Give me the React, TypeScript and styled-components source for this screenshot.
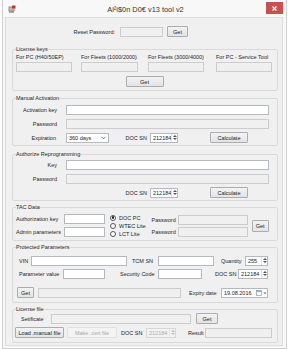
import React from "react";
import styled, { createGlobalStyle } from "styled-components";

const Global = createGlobalStyle`
  html, body { margin: 0; padding: 0; background: #ffffff; }
  body {
    font-family: "Liberation Sans", Arial, sans-serif;
    font-size: 5.5px;
    color: #1e1e1e;
  }
  * { box-sizing: border-box; }
`;

const Window = styled.div`
  margin-left: 2px;
  width: 285px;
  height: 349px;
  border: 1px solid #cfcfcf;
  border-top: none;
  background: #f8f8f8;
  padding: 0 3px 2px 2px;
  display: flex;
  flex-direction: column;
`;

const TitleBar = styled.div`
  height: 17px;
  display: grid;
  grid-template-columns: 1fr auto 1fr;
  align-items: center;
  padding-left: 3px;
`;

const Title = styled.div`
  font-size: 7.4px;
  color: #333;
  padding-top: 2px;
`;

const CloseBtn = styled.div`
  justify-self: end;
  align-self: start;
  margin-top: 2px;
  width: 17px;
  height: 12px;
  background: #c75050;
  display: flex;
  align-items: center;
  justify-content: center;
`;

const Content = styled.div`
  flex: 1;
  background: #f0f0f0;
  border: 1px solid #dcdcdc;
  display: flex;
  flex-direction: column;
`;

const Row = styled.div<{ $mt?: number; $pl?: number; $h?: number }>`
  display: flex;
  align-items: center;
  margin-top: ${(p) => p.$mt ?? 0}px;
  padding-left: ${(p) => p.$pl ?? 0}px;
  height: ${(p) => p.$h ?? 11}px;
`;

const Group = styled.fieldset<{ $mt: number; $pb?: number }>`
  margin: ${(p) => p.$mt}px 0 0 6px;
  width: 266px;
  border: 1px solid #d9d9d9;
  border-radius: 2px;
  padding: 0 3px ${(p) => p.$pb ?? 2}px 3px;
  min-width: 0;
`;

const Legend = styled.legend`
  padding: 0;
  margin: 0;
  line-height: 7px;
  height: 7px;
`;

const Label = styled.span<{ $w?: number; $ml?: number; $right?: boolean }>`
  flex-shrink: 0;
  white-space: nowrap;
  width: ${(p) => (p.$w ? `${p.$w}px` : "auto")};
  margin-left: ${(p) => p.$ml ?? 0}px;
  text-align: ${(p) => (p.$right ? "right" : "left")};
  overflow: visible;
`;

const Field = styled.input<{ $w: number; $ml?: number; $ro?: boolean }>`
  flex-shrink: 0;
  width: ${(p) => p.$w}px;
  height: 10px;
  margin: 0 0 0 ${(p) => p.$ml ?? 0}px;
  padding: 0 2px;
  font: inherit;
  color: #222;
  background: ${(p) => (p.$ro ? "#f0f0f0" : "#ffffff")};
  border: 1px solid ${(p) => (p.$ro ? "#cccccc" : "#b5b8be")};
  outline: none;
`;

const Button = styled.button<{ $w: number; $ml?: number; $h?: number; $off?: boolean }>`
  flex-shrink: 0;
  width: ${(p) => p.$w}px;
  height: ${(p) => p.$h ?? 11}px;
  margin: 0 0 0 ${(p) => p.$ml ?? 0}px;
  padding: 0;
  font: inherit;
  color: ${(p) => (p.$off ? "#a8a8a8" : "#222")};
  background: ${(p) => (p.$off ? "#f3f3f3" : "linear-gradient(#f3f3f3, #e3e3e3)")};
  border: 1px solid ${(p) => (p.$off ? "#e0e0e0" : "#acacac")};
  border-radius: 1px;
  white-space: nowrap;
`;

const Box = styled.div<{ $w: number; $ml?: number; $off?: boolean }>`
  flex-shrink: 0;
  width: ${(p) => p.$w}px;
  height: 10px;
  margin-left: ${(p) => p.$ml ?? 0}px;
  background: ${(p) => (p.$off ? "#f3f3f3" : "#ffffff")};
  border: 1px solid ${(p) => (p.$off ? "#d6d6d6" : "#b5b8be")};
  color: ${(p) => (p.$off ? "#a8a8a8" : "#222")};
  display: flex;
  align-items: center;
  padding-left: 2px;
  white-space: nowrap;
`;

const BoxText = styled.span`
  flex: 1;
`;

const Arrows = styled.div`
  width: 6px;
  height: 100%;
  border-left: 1px solid #e2e2e2;
  display: flex;
  flex-direction: column;
  align-items: center;
  justify-content: center;
  gap: 1px;
`;

const Spacer = styled.div<{ $w: number }>`
  flex-shrink: 0;
  width: ${(p) => p.$w}px;
`;

const KeyGrid = styled.div`
  display: grid;
  grid-template-columns: 65px 67px 68px 56px;
  align-items: center;
`;

const Center = styled.div<{ $mt: number }>`
  display: flex;
  justify-content: center;
  margin-top: ${(p) => p.$mt}px;
  padding-right: 1px;
`;

const TacBody = styled.div`
  display: flex;
  align-items: center;
  margin-top: 2px;
  height: 25px;
`;

const Col = styled.div<{ $ml?: number; $gap?: number }>`
  display: flex;
  flex-direction: column;
  gap: ${(p) => p.$gap ?? 2}px;
  margin-left: ${(p) => p.$ml ?? 0}px;
`;

const RadioRow = styled.label`
  display: flex;
  align-items: center;
  height: 8px;
  gap: 3px;
  white-space: nowrap;
`;

const RadioDot = styled.span<{ $on?: boolean }>`
  width: 6px;
  height: 6px;
  border-radius: 50%;
  border: 1px solid #555;
  background: #fff;
  display: flex;
  align-items: center;
  justify-content: center;
  &::after {
    content: "";
    width: 2.5px;
    height: 2.5px;
    border-radius: 50%;
    background: ${(p) => (p.$on ? "#222" : "transparent")};
  }
`;

const Updown = ({ off }: { off?: boolean }) => (
  <Arrows>
    <svg width="4" height="2" viewBox="0 0 4 2">
      <path d="M0 2 L2 0 L4 2 Z" fill={off ? "#bbb" : "#555"} />
    </svg>
    <svg width="4" height="2" viewBox="0 0 4 2">
      <path d="M0 0 L2 2 L4 0 Z" fill={off ? "#bbb" : "#555"} />
    </svg>
  </Arrows>
);

const Spin = ({ w, ml, value, off }: { w: number; ml?: number; value: string; off?: boolean }) => (
  <Box $w={w} $ml={ml} $off={off}>
    <BoxText>{value}</BoxText>
    <Updown off={off} />
  </Box>
);

const AppIcon = () => (
  <svg width="8" height="8" viewBox="0 0 8 8">
    <rect x="0.5" y="1.5" width="6" height="5" fill="#9a8f86" />
    <rect x="1.5" y="2.5" width="4" height="3" fill="#c9b9a8" />
    <rect x="4" y="0.5" width="3.5" height="3" fill="#c0392b" />
    <rect x="1" y="6.5" width="5" height="1" fill="#6b625b" />
  </svg>
);

export default function App() {
  return (
    <>
      <Global />
      <Window>
        <TitleBar>
          <AppIcon />
          <Title>Al²i$0n D0€ v13 tool v2</Title>
          <CloseBtn>
            <svg width="5" height="5" viewBox="0 0 5 5">
              <path d="M0.5 0.5 L4.5 4.5 M4.5 0.5 L0.5 4.5" stroke="#fff" strokeWidth="1.2" />
            </svg>
          </CloseBtn>
        </TitleBar>

        <Content>
          <Row $mt={8} $pl={49}>
            <Label $w={60} $right>Reset Password:</Label>
            <Field $w={43} $ml={5} $ro readOnly />
            <Button $w={21} $ml={4}>Get</Button>
          </Row>

          <Group $mt={9} $pb={3}>
            <Legend>License keys</Legend>
            <KeyGrid style={{ height: 7 }}>
              <Label>For PC (H40/50EP)</Label>
              <Label>For Fleets (1000/2000)</Label>
              <Label>For Fleets (3000/4000)</Label>
              <Label>For PC - Service Tool</Label>
            </KeyGrid>
            <KeyGrid style={{ marginTop: 2 }}>
              <Field $w={56} $ro readOnly />
              <Field $w={57} $ro readOnly />
              <Field $w={56} $ro readOnly />
              <Field $w={56} $ro readOnly />
            </KeyGrid>
            <Center $mt={4}>
              <Button $w={38}>Get</Button>
            </Center>
          </Group>

          <Group $mt={4}>
            <Legend>Manual Activation</Legend>
            <Row $mt={3} $h={10}>
              <Label $w={41} $right>Activation key</Label>
              <Field $w={203} $ml={9} />
            </Row>
            <Row $mt={4} $h={10}>
              <Label $w={41} $right>Password</Label>
              <Field $w={203} $ml={9} $ro readOnly />
            </Row>
            <Row $mt={3}>
              <Label $w={40} $right>Expiration</Label>
              <Box $w={43} $ml={10}>
                <BoxText>360 days</BoxText>
                <svg width="8" height="4" viewBox="0 0 8 4">
                  <path d="M1.5 0.8 L3.5 2.8 L5.5 0.8" stroke="#555" strokeWidth="0.8" fill="none" />
                </svg>
              </Box>
              <Label $w={24} $ml={14} $right>DOC SN</Label>
              <Spin w={28} ml={3} value="212184" />
              <Button $w={38} $ml={32}>Calculate</Button>
            </Row>
          </Group>

          <Group $mt={5}>
            <Legend>Authorize Reprogramming</Legend>
            <Row $mt={2} $h={10}>
              <Label $w={41} $right>Key</Label>
              <Field $w={203} $ml={9} />
            </Row>
            <Row $mt={4} $h={10}>
              <Label $w={41} $right>Password</Label>
              <Field $w={203} $ml={9} $ro readOnly />
            </Row>
            <Row $mt={3}>
              <Spacer $w={93} />
              <Label $w={24} $ml={14} $right>DOC SN</Label>
              <Spin w={28} ml={3} value="212184" />
              <Button $w={38} $ml={32}>Calculate</Button>
            </Row>
          </Group>

          <Group $mt={3}>
            <Legend>TAC Data</Legend>
            <TacBody>
              <Col $gap={3}>
                <Row $h={10}>
                  <Label $w={48}>Authorization key</Label>
                  <Field $w={41} />
                </Row>
                <Row $h={10}>
                  <Label $w={48}>Admin parameters</Label>
                  <Field $w={41} />
                </Row>
              </Col>
              <Col $ml={5} $gap={0}>
                <RadioRow><RadioDot $on />DOC PC</RadioRow>
                <RadioRow><RadioDot />WTEC Lite</RadioRow>
                <RadioRow><RadioDot />LCT Lite</RadioRow>
              </Col>
              <Col $ml={6} $gap={2}>
                <Row $h={10}>
                  <Label $w={26}>Password</Label>
                  <Field $w={70} $ro readOnly />
                </Row>
                <Row $h={10}>
                  <Label $w={26}>Password</Label>
                  <Field $w={70} $ro readOnly />
                </Row>
              </Col>
              <Button $w={17} $ml={4} $h={12}>Get</Button>
            </TacBody>
          </Group>

          <Group $mt={3} $pb={4}>
            <Legend>Protected Parameters</Legend>
            <Row $mt={4}>
              <Label $w={8} $ml={3}>VIN</Label>
              <Field $w={96} $ml={4} />
              <Label $w={22} $ml={5}>TCM SN</Label>
              <Field $w={56} $ml={4} />
              <Label $w={19} $ml={7} $right>Quantity</Label>
              <Spin w={23} ml={5} value="255" />
            </Row>
            <Row $mt={2}>
              <Label $w={36} $ml={3}>Parameter value</Label>
              <Field $w={42} $ml={8} />
              <Label $w={35} $ml={15}>Security Code</Label>
              <Field $w={44} $ml={3} />
              <Label $w={21} $ml={13} $right>DOC SN</Label>
              <Spin w={30} ml={2} value="212184" />
            </Row>
            <Row $mt={8}>
              <Button $w={17} $ml={1}>Get</Button>
              <Field $w={143} $ml={4} $ro readOnly />
              <Label $w={31} $ml={8}>Expiry date</Label>
              <Box $w={47} $ml={1}>
                <BoxText>19.08.2016</BoxText>
                <svg width="11" height="6" viewBox="0 0 11 6">
                  <rect x="0.5" y="0.5" width="5" height="5" fill="#fff" stroke="#888" strokeWidth="0.6" />
                  <rect x="0.5" y="0.5" width="5" height="1.4" fill="#8aa6c8" />
                  <path d="M7.5 2.5 L9 4 L10.5 2.5" fill="#555" />
                </svg>
              </Box>
            </Row>
          </Group>

          <Group $mt={3} $pb={4}>
            <Legend>License file</Legend>
            <Row>
              <Label $w={25} $ml={5}>Setificate</Label>
              <Field $w={140} $ml={5} $ro readOnly />
              <Button $w={22} $ml={5}>Get</Button>
            </Row>
            <Row $mt={3}>
              <Button $w={49} $ml={-1}>Load .manual file</Button>
              <Button $w={50} $ml={3} $off>Make .cert file</Button>
              <Label $w={19} $ml={4}>DOC SN</Label>
              <Spin w={30} ml={6} value="212184" off />
              <Label $w={15} $ml={12}>Result</Label>
              <Field $w={67} $ml={2} $ro readOnly />
            </Row>
          </Group>
        </Content>
      </Window>
    </>
  );
}
